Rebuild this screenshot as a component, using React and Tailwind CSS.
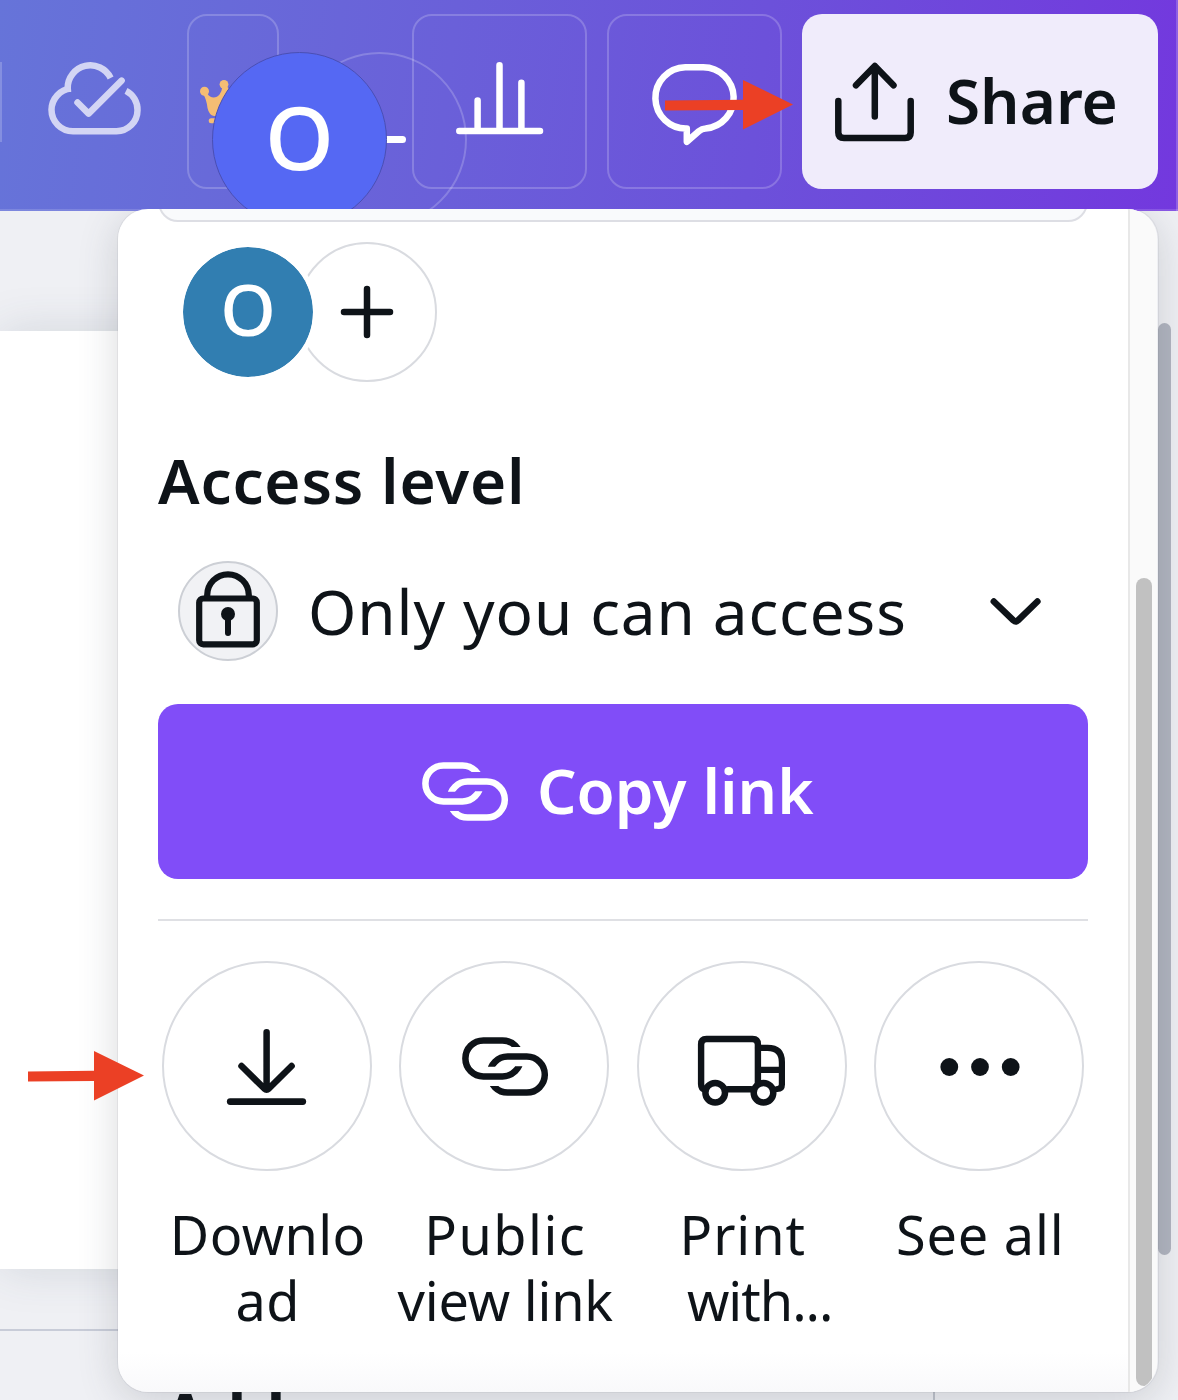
import React from 'react';

const INK = '#0e1318';

function Icon({ box, width, height, color = INK, className = '', children }) {
  return (
    <svg
      viewBox={box}
      width={width}
      height={height}
      fill="none"
      stroke={color}
      strokeWidth="6.5"
      strokeLinecap="round"
      strokeLinejoin="round"
      className={`shrink-0 ${className}`}
    >
      {children}
    </svg>
  );
}

function CloudCheck() {
  return (
    <Icon box="44 58 102 82" width={102} height={82} color="#d3d5f4">
      <g strokeLinecap="butt">
        <path d="M67.7 92V88A22.6 22.6 0 0 1 110.6 78" />
        <path d="M71 88.6A21.6 21.5 0 0 0 51.5 109.8A21.5 21.4 0 0 0 73 131.2H116.5A21 21 0 0 0 137.5 110.2A21 21 0 0 0 126 90.8" />
      </g>
      <path d="M77.5 102.5L88.6 113.6L121.6 80.6" />
    </Icon>
  );
}

function Crown() {
  return (
    <svg viewBox="198 78 54 48" width={54} height={48} fill="#f5bd74" className="shrink-0">
      <circle cx="204.5" cy="91.2" r="4.5" />
      <circle cx="224" cy="84.3" r="4.4" />
      <path d="M203 94L207.3 93.5C210 98.5 216.5 98.5 219.5 94.5Q222 91 222.3 87L227.5 87L232 94V116H214Q209 115 207.5 108Q206.5 99 203 94Z" />
      <rect x="208.7" y="118.2" width="30" height="5" rx="2.5" />
    </svg>
  );
}

function Bars() {
  return (
    <Icon box="450 58 100 82" width={100} height={82} color="#fff">
      <path d="M459.3 131.1H540M477.6 131V100.4M499.5 131V65.3M521.4 131V82.8" />
    </Icon>
  );
}

function Bubble() {
  return (
    <Icon box="648 58 94 92" width={94} height={92} color="#fff">
      <path d="M686.8 128.6A30.6 30.6 0 0 1 685.3 67.3H703.2A30.6 30.6 0 0 1 705.5 128.4Q702 128.5 698.8 131.2L686.8 141.8Z" />
    </Icon>
  );
}

function ShareIcon() {
  return (
    <Icon box="832 58.5 86 86" width={86} height={86}>
      <path d="M838.3 100.4V132Q838.3 137.6 844 137.6H905Q910.7 137.6 910.7 132V100.4" />
      <path d="M874.8 116V66M856 84.8L874.8 65.4L893.5 84.8" />
    </Icon>
  );
}

function LinkIcon({ id, color, className }) {
  return (
    <Icon box="420 758 90 66" width={90} height={66} color={color} className={className}>
      <defs>
        <clipPath id={`${id}-a`}>
          <path d="M420 758H510V772H462V791.3H510V824H420Z" />
        </clipPath>
        <clipPath id={`${id}-b`}>
          <path d="M510 758H420V791.8H468V811H420V824H510Z" />
        </clipPath>
      </defs>
      <rect x="425.4" y="765.4" width="55.1" height="36" rx="18" clipPath={`url(#${id}-a)`} />
      <rect x="449.7" y="781.6" width="55.1" height="36" rx="18" clipPath={`url(#${id}-b)`} />
    </Icon>
  );
}

function LockIcon() {
  return (
    <Icon box="193 569 70 84" width={70} height={84}>
      <rect x="199.2" y="598.5" width="57.6" height="45.8" rx="4" strokeWidth="6.2" />
      <path d="M207.2 598V595.1A20.8 20.8 0 0 1 248.8 595.1V598" strokeWidth="6.2" />
      <circle cx="228" cy="614" r="7" fill={INK} stroke="none" />
      <path d="M228 616V633" strokeWidth="6" />
    </Icon>
  );
}

function DownloadIcon() {
  return (
    <Icon box="222 1023 90 86" width={90} height={86}>
      <path d="M266.6 1032.3V1088M241.5 1066L264.3 1088.5Q266.6 1090.5 268.9 1088.5L291.6 1066" />
      <path d="M230.2 1101.6H302.8" strokeWidth="6.7" />
    </Icon>
  );
}

function TruckIcon() {
  return (
    <Icon box="694 1026 96 80" width={96} height={80}>
      <path d="M704.5 1089.4Q701.1 1088.5 701.1 1084V1044.5Q701.1 1039 706.5 1039H752.5Q757.9 1039 757.9 1044.5V1084" strokeWidth="6.4" />
      <path d="M728 1089.3H751" />
      <path d="M758 1047.9H767.5Q781.9 1047.9 781.9 1062V1084.5Q781.9 1089 777.3 1089M759 1069.9H781" strokeWidth="6.2" />
      <circle cx="715.2" cy="1092.7" r="9.8" />
      <circle cx="763.5" cy="1092.7" r="9.8" />
    </Icon>
  );
}

function DotsIcon() {
  return (
    <svg viewBox="0 0 80 18" width={80} height={18} fill={INK} className="mt-px ml-px">
      <circle cx="9.3" cy="9" r="8.9" />
      <circle cx="40" cy="9" r="8.9" />
      <circle cx="70.7" cy="9" r="8.9" />
    </svg>
  );
}

function RedArrow({ width, shaft, className }) {
  return (
    <svg
      viewBox={`0 0 ${width} 50`}
      width={width}
      height={50}
      fill="#eb4025"
      className={`absolute z-30 ${className}`}
    >
      <path d={`M0 20.4L${shaft} 19.8V0L${width} 24.6L${shaft} 49.6V29.9L0 30.6Z`} />
    </svg>
  );
}

function Header() {
  return (
    <header className="relative flex h-[211px] items-start border-b-2 border-white/15 bg-[linear-gradient(97deg,#6674d9_0%,#6a60d9_38%,#6c51da_64%,#7338de_100%)] bg-origin-border pt-[14px]">
      <div className="mt-12 h-20 w-[2px] bg-white/20" />
      <div className="mt-[44px] ml-[42px]">
        <CloudCheck />
      </div>
      <div className="ml-[41px] flex h-[175px] w-[92px] shrink-0 rounded-[20px] border-2 border-white/20 pt-[62px] pl-[9px]">
        <Crown />
      </div>
      <div className="ml-[133px] flex h-[175px] w-[175px] shrink-0 justify-center rounded-[20px] border-2 border-white/20 pt-[42px]">
        <Bars />
      </div>
      <div className="ml-5 flex h-[175px] w-[175px] shrink-0 justify-center rounded-[20px] border-2 border-white/20 pt-[42px]">
        <Bubble />
      </div>
      <button className="ml-5 flex h-[175px] w-[356px] shrink-0 items-center rounded-[20px] bg-[#f0ecfb] pl-[30px]">
        <ShareIcon />
        <span className="-mt-[3px] ml-[28px] text-[62px] leading-none font-semibold">Share</span>
      </button>
      <div className="absolute top-0 right-0 h-[211px] w-[2px] bg-white/20" />
      <div className="absolute top-[52px] left-[292px] h-[175px] w-[175px] rounded-full border-2 border-white/20" />
      <div className="absolute top-[136px] left-[354px] h-[6.5px] w-[51.5px] rounded-full bg-white" />
      <div className="absolute top-[52px] left-[212px] flex h-[175px] w-[175px] items-center justify-center rounded-full border border-[#4a4fb4] bg-[#5568f3] text-[88px] leading-none text-white">
        <span className="-mt-[7px] font-medium">O</span>
      </div>
    </header>
  );
}

function Action({ icon, lines }) {
  return (
    <div className="flex flex-col items-center">
      <div className="flex h-[210px] w-[210px] items-center justify-center rounded-full border-2 border-[#d9dbe0]">
        {icon}
      </div>
      <div className="mt-[30px] ml-[2px] flex flex-col items-center text-[54px] leading-[66px] whitespace-nowrap">
        {lines.map(([text, cls]) => (
          <span key={text} className={cls}>{text}</span>
        ))}
      </div>
    </div>
  );
}

function SharePanel() {
  return (
    <section className="absolute top-[209px] left-[118px] z-20 flex h-[1183px] w-[1039px] overflow-hidden rounded-[30px] bg-white bg-[linear-gradient(to_top,#f9f9fb,#fff_40px)]">
      <div className="w-[1010px] pr-10 pl-10">
        <div className="-mt-[47px] h-[60px] rounded-[20px] border-2 border-[#dddee4] bg-[#f9fafc]" />
        <div className="mt-[20px] flex items-center pl-5">
          <div className="z-10 flex h-[140px] w-[140px] shrink-0 items-center justify-center rounded-full border-[5px] border-white bg-[#317eb1] bg-clip-padding text-[71px] leading-none text-white">
            <span className="-mt-[7px] font-medium">O</span>
          </div>
          <div className="-ml-[21px] flex h-[140px] w-[140px] items-center justify-center rounded-full border-2 border-[#d9dbe0]">
            <Icon box="0 0 54 54" width={54} height={54}>
              <path d="M4 27H50M27 4V50" />
            </Icon>
          </div>
        </div>
        <h2 className="mt-[58px] text-[62px] leading-[80px] font-semibold tracking-[0.8px]">Access level</h2>
        <div className="mt-[41px] flex h-[100px] items-center pl-5">
          <div className="flex h-[100px] w-[100px] shrink-0 items-center justify-center rounded-full border-2 border-[#cccfd5] bg-[#f1f2f5]">
            <LockIcon />
          </div>
          <span className="ml-[30px] w-[600px] text-[62px] leading-[80px] tracking-[0.9px] whitespace-nowrap">
            Only you can access
          </span>
          <Icon box="986 594 60 34" width={60} height={34} className="ml-[78px]">
            <path d="M993.8 601.5L1013.4 620.4Q1015.7 622.4 1018 620.4L1037.4 601.5" />
          </Icon>
        </div>
        <button className="mt-[43px] flex h-[175px] w-full items-center rounded-[20px] bg-[#814df8] pl-[262px] text-white">
          <LinkIcon id="copy" color="#fff" className="-mt-[2px]" />
          <span className="-mt-[3px] ml-[27px] text-[62px] leading-none font-semibold">Copy link</span>
        </button>
        <div className="mt-10 h-[2px] bg-[#dfe0e4]" />
        <div className="mt-10 -ml-[10px] grid w-[950px] grid-cols-4">
          <Action icon={<DownloadIcon />} lines={[['Downlo', 'tracking-[0.4px]'], ['ad', 'tracking-[0.4px]']]} />
          <Action
            icon={<LinkIcon id="public" color={INK} className="ml-[2px]" />}
            lines={[['Public', 'tracking-[1.5px]'], ['view link', 'tracking-[-0.2px]']]}
          />
          <Action icon={<TruckIcon />} lines={[['Print', 'tracking-[0.9px]'], ['with...', 'ml-[34px] tracking-[-1px]']]} />
          <Action icon={<DotsIcon />} lines={[['See all', 'tracking-[0.8px]']]} />
        </div>
      </div>
      <div className="w-[29px] border-l-2 border-[#e8e8e8] bg-[#fafafa] pt-[369px] pl-[6px]">
        <div className="h-[808px] w-4 rounded-full bg-[#c1c1c1]" />
      </div>
    </section>
  );
}

export default function App() {
  return (
    <div
      className="relative flex h-[1400px] w-[1178px] flex-col overflow-hidden bg-[#eff0f4] text-[#0e1318]"
      style={{ fontFamily: '"Noto Sans", sans-serif' }}
    >
      <Header />
      <main className="flex h-[1118px] bg-[#eff0f4]">
        <div className="mt-[120px] h-[938px] w-[1120px] bg-white shadow-[0_0_44px_rgba(57,76,96,0.15)]" />
        <div className="mt-[112px] ml-[38px] h-[932px] w-[13px] rounded-full bg-[#b1b5c0]" />
      </main>
      <footer className="relative flex h-[71px] flex-col bg-[#eff0f4]">
        <div className="h-[2px] w-[1120px] shrink-0 bg-[#c8ccd8]" />
        <span className="mt-[44px] ml-[101px] text-[62px] leading-[80px] font-bold whitespace-nowrap">
          <span className="mr-[33px] inline-block w-[30px] text-center">+</span>Add
        </span>
        <div className="absolute top-0 left-[933px] h-[71px] w-[2px] bg-[#bfc3cc]" />
      </footer>
      <div className="absolute top-[209px] left-[118px] z-10 h-[1183px] w-[1040px] rounded-[30px] shadow-[0_0_0_1px_rgba(64,68,82,0.07),0_8px_40px_rgba(64,68,82,0.2)] [clip-path:inset(2px_-60px_-60px_-80px)]" />
      <SharePanel />
      <RedArrow width={128} shaft={78} className="top-[80px] left-[665px]" />
      <RedArrow width={116} shaft={66} className="top-[1051px] left-[28px]" />
    </div>
  );
}
